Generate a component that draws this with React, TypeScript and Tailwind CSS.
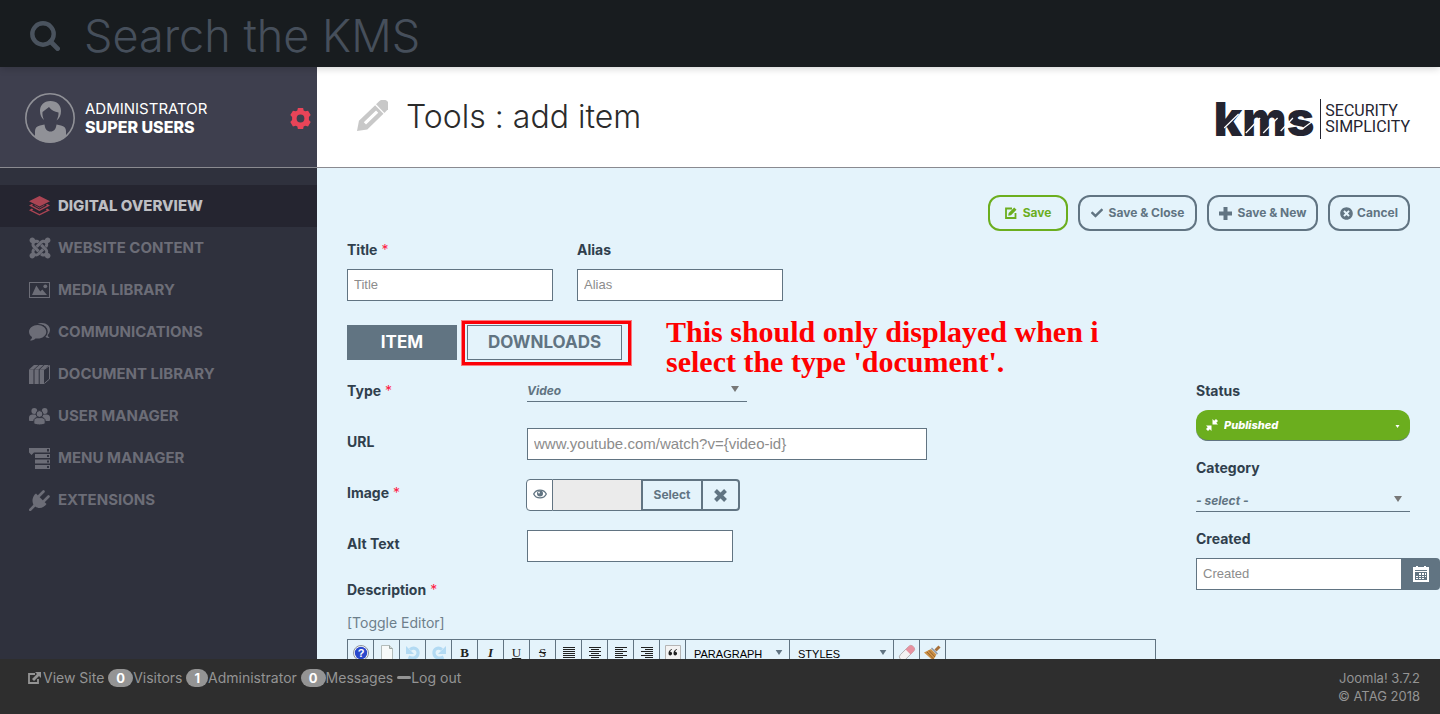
import React from "react";
import { FaCheck, FaJoomla, FaTimesCircle } from "react-icons/fa";

type IconProps = { className?: string };

function SearchIcon({ className }: IconProps) {
  return (
    <svg viewBox="0 0 30 30" className={className} fill="none" stroke="currentColor" aria-hidden="true">
      <circle cx="13" cy="13" r="10.700" strokeWidth="4.400" />
      <path d="M20.500 20.500 27.600 27.600" strokeWidth="4.800" strokeLinecap="round" />
    </svg>
  );
}

function LayersIcon({ className }: IconProps) {
  return (
    <svg viewBox="0 0 21 20" className={className} fill="currentColor" aria-hidden="true">
      <path d="M10.500 0 21 5.200 10.500 10.400 0 5.200Z" />
      <path d="M2.800 8 0 9.600 10.500 15 21 9.600 18.200 8 16.600 8.800 18 9.600 10.500 13.500 3 9.600 4.400 8.800Z" />
      <path d="M2.800 12.600 0 14.200 10.500 19.600 21 14.200 18.200 12.600 16.600 13.400 18 14.200 10.500 18.100 3 14.200 4.400 13.400Z" />
      <path d="M5.500 9.200 10.500 12 15.500 9.200" fill="none" stroke="currentColor" strokeWidth=".800" />
    </svg>
  );
}

function PictureIcon({ className }: IconProps) {
  return (
    <svg viewBox="0 0 21 16" className={className} fill="currentColor" aria-hidden="true">
      <path fillRule="evenodd" d="M0 0H21V16H0ZM1 1V15H20V1Z" />
      <path d="M3 13 7.300 3.500 11.300 9.500 13.300 7.500 18 13Z" />
      <circle cx="16.300" cy="4.300" r="1.900" />
    </svg>
  );
}

function BubblesIcon({ className }: IconProps) {
  return (
    <svg viewBox="0 0 21 18" className={className} fill="currentColor" aria-hidden="true">
      <path d="M8 1.300C9.500.300 11.500 0 13 0 17.500 0 21 3 21 6.800 21 9 20 10.800 18.700 12 18.700 13.300 19.800 14.300 20.800 14.800 18.500 15.300 17 14.600 15.800 13.500L14 13.800 17.500 10V5L14.500 2Z" />
      <ellipse cx="9" cy="8.800" rx="9.800" ry="7.800" fill="#2f313d" />
      <path d="M8.700 2C13.500 2 17.300 5 17.300 8.800S13.500 15.600 8.700 15.600C8 15.600 7.200 15.600 6.500 15.400 5 16.800 3.500 17.500 1.200 17.500V17C2.400 16.300 3 15.300 3 14.100 1.200 12.800 0 11 0 8.800 0 5 3.900 2 8.700 2Z" />
    </svg>
  );
}

function BooksIcon({ className }: IconProps) {
  return (
    <svg viewBox="0 0 21 19" className={className} fill="currentColor" aria-hidden="true">
      <path d="M0 4.500H4.500V19H0ZM5.500 4.500H9.700V19H5.500ZM10.700 4.500H15V19H10.700Z" />
      <path d="M0 4.600 5 0H9.500L4.500 4.600ZM5.500 4.600 10.500 0H14.500L9.700 4.600ZM10.700 4.600 15.500 0H20L15 4.600Z" />
      <path d="M15.300 4.500 20.500.500V14L15.300 18.500" fill="none" stroke="currentColor" />
    </svg>
  );
}

function PeopleIcon({ className }: IconProps) {
  return (
    <svg viewBox="0 0 21 17" className={className} fill="currentColor" aria-hidden="true">
      <circle cx="5.300" cy="3" r="2.900" />
      <circle cx="15.700" cy="3" r="2.900" />
      <path d="M0 12.500V9.500C0 7.500 1.500 6.500 3.500 6.500H6.500L8 8.500 6 13H.800ZM21 12.500V9.500C21 7.500 19.500 6.500 17.500 6.500H14.500L13 8.500 15 13H20.200Z" />
      <g stroke="#2f313d" strokeWidth="1">
        <circle cx="10.500" cy="6" r="3.400" />
        <path d="M4.800 15.500V13C4.800 10.800 6.500 9.600 8.500 9.600H12.500C14.500 9.600 16.200 10.800 16.200 13V15.500C14.500 17.400 6.500 17.400 4.800 15.500Z" />
      </g>
    </svg>
  );
}

function MenuStackIcon({ className }: IconProps) {
  return (
    <svg viewBox="0 0 21 21" className={className} aria-hidden="true">
      <path d="M0 0H21V4.500H5L2.500 7 0 4.500ZM6 6H21V10H6ZM6 11.500H21V15.500H6ZM6 17H21V21H6Z" fill="currentColor" />
      <path d="M18 1H20V3.500H18ZM18 7H20V9H18ZM18 12.500H20V14.500H18ZM18 18H20V20H18Z" fill="#2f313d" />
    </svg>
  );
}

function PlugIcon({ className }: IconProps) {
  return (
    <svg viewBox="0 0 21 21" className={className} aria-hidden="true">
      <path d="M1.200 19.800 5.500 15.500M10 6 14.500 1.500M15 11 19.500 6.500" stroke="currentColor" strokeWidth="2.600" strokeLinecap="round" />
      <path d="M7 3.500 17.500 14C15.500 17.500 10 19.500 6.300 16.500L4.500 14.700C2.500 11 3.500 6 7 3.500Z" fill="currentColor" />
    </svg>
  );
}

function GearIcon({ className }: IconProps) {
  return (
    <svg viewBox="0 0 20 20" className={className} fill="currentColor" aria-hidden="true">
      <path
        fillRule="evenodd"
        d="M7.500 0H12.500L13 2.400 14.500 3.200 17.200 2.500 19.700 6.600 18 8.500V11.500L19.700 13.400 17.200 17.500 14.500 16.800 13 17.600 12.500 20H7.500L7 17.600 5.500 16.800 2.800 17.500.300 13.400 2 11.500V8.500L.300 6.600 2.800 2.500 5.500 3.200 7 2.400ZM10 6.300A3.700 3.700 0 1 0 10 13.700 3.700 3.700 0 1 0 10 6.300Z"
      />
    </svg>
  );
}

function PencilIcon({ className }: IconProps) {
  return (
    <svg viewBox="0 0 31 31" className={className} fill="#c8c8c8" aria-hidden="true">
      <g transform="translate(0 31) rotate(-44)">
        <path fillRule="evenodd" d="M0 0 8.500-6H31V6H8.500ZM11-1.600V1.600H28V-1.600Z" />
        <path d="M32.300-6H37C40-6 42.500-3 42.500 0S40 6 37 6H32.300Z" />
      </g>
    </svg>
  );
}

function EditSquareIcon({ className }: IconProps) {
  return (
    <svg viewBox="0 0 12 12" className={className} aria-hidden="true">
      <path d="M7 1.500H1V11H10.500V6" fill="none" stroke="currentColor" strokeWidth="1.800" />
      <path d="M3.200 8.800 3.700 6 9.200.500 11.500 2.800 6 8.300Z" fill="currentColor" />
    </svg>
  );
}

function PlusIcon({ className }: IconProps) {
  return (
    <svg viewBox="0 0 13 13" className={className} fill="currentColor" aria-hidden="true">
      <path d="M4.500 0H8.500V4.500H13V8.500H8.500V13H4.500V8.500H0V4.500H4.500Z" />
    </svg>
  );
}

function CrossIcon({ className }: IconProps) {
  return (
    <svg viewBox="0 0 13 13" className={className} stroke="currentColor" strokeWidth="4" aria-hidden="true">
      <path d="M1.500 1.500 11.500 11.500M11.500 1.500 1.500 11.500" />
    </svg>
  );
}

function OutIcon({ className }: IconProps) {
  return (
    <svg viewBox="0 0 13 12" className={className} aria-hidden="true">
      <path d="M7 2H1V11H10V7" fill="none" stroke="currentColor" strokeWidth="1.800" />
      <path d="M7 0H13V6L11 4 6 9 4 7 9 2Z" fill="currentColor" />
    </svg>
  );
}

function AvatarIcon({ className }: IconProps) {
  return (
    <svg viewBox="0 0 50 50" className={className} aria-hidden="true">
      <defs>
        <clipPath id="avatar-circle">
          <circle cx="25" cy="25" r="24.500" />
        </clipPath>
      </defs>
      <g clipPath="url(#avatar-circle)">
        <path
          d="M10 50V38C10 35 12 33 15 32.500L19.500 31.500C20 36 22 38.500 25.500 38.500S31 36 31.500 31.500L36 32.500C39 33 41 35 41 38V50Z"
          fill="#909197"
        />
        <path
          d="M25.500 8C18.500 8 15 12.500 15 18 15 22 16.500 25 19 27 17.500 24 17.300 21.500 17.500 19L24 14C26.500 17.500 29.500 18.500 33.500 19.500 33.700 22 33 25 31.500 27.500 34.500 25.500 36 22 36 18 36 12 32 8 25.500 8Z"
          fill="#909197"
        />
      </g>
      <circle cx="25" cy="25" r="24.200" fill="none" stroke="#909197" strokeWidth="1.600" />
    </svg>
  );
}

function EyeIcon({ className }: IconProps) {
  return (
    <svg viewBox="0 0 14 10" className={className} aria-hidden="true">
      <path d="M.700 5C3-.200 11-.200 13.300 5 11 10.200 3 10.200.700 5Z" fill="none" stroke="currentColor" strokeWidth="1.300" />
      <circle cx="7" cy="4.500" r="3" fill="currentColor" />
      <circle cx="6" cy="3.500" r=".900" fill="#fff" />
    </svg>
  );
}

function CompressIcon({ className }: IconProps) {
  return (
    <svg viewBox="0 0 12 12" className={className} fill="currentColor" aria-hidden="true">
      <path d="M6.500 0 8.200 1.700 10 0 12 2 10.300 3.800 12 5.500H6.500Z" />
      <path d="M0 6.500H5.500V12L3.800 10.300 2 12 0 10 1.700 8.200Z" />
    </svg>
  );
}

function CalendarIcon({ className }: IconProps) {
  return (
    <svg viewBox="0 0 16 16" className={className} shapeRendering="crispEdges" aria-hidden="true">
      <path d="M0 1H3V0H5V1H11V0H13V1H16V16H0Z" fill="#fff" />
      <path d="M2 4H14V5H2ZM2 6H14V14H2Z" fill="#617482" />
      <path d="M6 7H8V9H6ZM9 7H11V9H9ZM12 7H13V9H12ZM3 10H5V11H3ZM6 10H8V11H6ZM9 10H11V11H9ZM12 10H13V11H12ZM3 12H5V13H3ZM6 12H8V13H6ZM9 12H11V13H9Z" fill="#fff" />
    </svg>
  );
}

function Caret({ className }: IconProps) {
  return (
    <svg viewBox="0 0 8 6" className={className} fill="currentColor" aria-hidden="true">
      <path d="M0 0H8L4 6Z" />
    </svg>
  );
}

function HelpIcon() {
  return (
    <svg viewBox="0 0 16 16" className="size-4" aria-hidden="true">
      <circle cx="8" cy="8" r="7.500" fill="#fff" stroke="#8d949b" />
      <circle cx="8" cy="8" r="6.200" fill="#2a49cc" />
      <text x="8" y="12" textAnchor="middle" fill="#fff" fontSize="11" fontWeight="700" fontFamily="Liberation Sans">?</text>
    </svg>
  );
}

function PageIcon() {
  return (
    <svg viewBox="0 0 16 16" className="size-4" aria-hidden="true">
      <path d="M2.500.500H10.500L13.500 3.500V16H2.500Z" fill="#f7faf9" stroke="#b3bcba" />
      <path d="M10.500.500V3.500H13.500" fill="#cfd8d5" stroke="#98a3a0" />
    </svg>
  );
}

function UndoIcon({ className }: IconProps) {
  return (
    <svg viewBox="0 0 16 16" className={className} aria-hidden="true">
      <path d="M5 4.500C9 1.500 13.500 4 13 8.500 12.500 12.500 8 14.500 3.500 12" fill="none" stroke="#b2daf3" strokeWidth="3.200" />
      <path d="M1 1V9H9Z" fill="#b2daf3" />
    </svg>
  );
}

function LinesIcon({ widths, align }: { widths: number[]; align: "left" | "center" | "right" }) {
  return (
    <svg viewBox="0 0 12 12" className="size-3" shapeRendering="crispEdges" aria-hidden="true">
      {widths.map((w, i) => (
        <rect
          key={i}
          x={align === "left" ? 0 : align === "right" ? 12 - w : (12 - w) / 2}
          y={i * 2}
          width={w}
          height="1"
          fill="#222"
        />
      ))}
    </svg>
  );
}

function EraserIcon() {
  return (
    <svg viewBox="0 0 18 18" className="size-[18px]" aria-hidden="true">
      <g transform="rotate(-45 9 9)">
        <rect x="0" y="5.500" width="18" height="7" rx="3" fill="#f4f2f2" stroke="#a9a4a6" strokeWidth=".800" />
        <path d="M10.500 5.500H15A3 3 0 0 1 18 8.500V9.500A3 3 0 0 1 15 12.500H10.500Z" fill="#e791a0" />
      </g>
    </svg>
  );
}

function BroomIcon() {
  return (
    <svg viewBox="0 0 17 16" className="h-4 w-[17px]" aria-hidden="true">
      <path d="M11.500 5.500 15.500 1.500" stroke="#a8703a" strokeWidth="3" />
      <path d="M0 7.500 7 4 12.500 9.500 9 15.500Z" fill="#cb9148" />
      <path d="M3 7 9.500 14M5 5.500 11 12" stroke="#99632a" />
      <path d="M7.500 3 13.500 9" stroke="#8b95a3" strokeWidth="1.200" />
    </svg>
  );
}

const navItems = [
  { label: "DIGITAL OVERVIEW", icon: <LayersIcon className="w-[21px] text-[#ab4453]" />, active: true },
  { label: "WEBSITE CONTENT", icon: <FaJoomla className="size-6 shrink-0" /> },
  { label: "MEDIA LIBRARY", icon: <PictureIcon className="w-[21px]" /> },
  { label: "COMMUNICATIONS", icon: <BubblesIcon className="w-[21px]" /> },
  { label: "DOCUMENT LIBRARY", icon: <BooksIcon className="w-[21px]" /> },
  { label: "USER MANAGER", icon: <PeopleIcon className="w-[21px]" /> },
  { label: "MENU MANAGER", icon: <MenuStackIcon className="w-[21px]" /> },
  { label: "EXTENSIONS", icon: <PlugIcon className="w-[21px]" /> },
];

const labelClass = "block text-[14px] leading-7 font-bold text-[#303f4d]";
const inputClass =
  "h-8 border border-[#617482] bg-white px-1.5 pb-0.5 font-['Liberation_Sans',sans-serif] text-[#555] placeholder:text-[#8c8c8c] outline-none";
const toolButton = "flex w-[26px] shrink-0 items-center justify-center border-r border-[#617482]";
const glyph = "font-['Liberation_Serif',serif] text-[13px] text-[#222]";

function Star() {
  return <span className="font-normal text-[#ff1a44]"> *</span>;
}

function ToolbarSelect({ label }: { label: string }) {
  return (
    <div className="relative w-[104px] shrink-0 border-r border-[#617482]">
      <select
        aria-label={label}
        className="size-full appearance-none bg-transparent pb-1 pl-2 font-['Liberation_Sans',sans-serif] text-[11px] text-black outline-none"
      >
        <option>{label}</option>
      </select>
      <Caret className="pointer-events-none absolute top-2.5 right-1.5 h-[5px] w-2 text-[#617482]" />
    </div>
  );
}

function Badge({ children }: { children: React.ReactNode }) {
  return (
    <span className="rounded-full bg-[#949494] px-2 text-[13px] leading-[18px] font-bold text-white">{children}</span>
  );
}

export default function App() {
  return (
    <div className="flex h-screen flex-col overflow-hidden font-['Inter',sans-serif]">
      <header className="z-10 flex h-[67px] shrink-0 items-center gap-6 bg-[#181c1f] pt-1 pl-[30px] shadow-[0_1px_8px_rgba(0,0,0,0.2)]">
        <SearchIcon className="size-[30px] shrink-0 text-[#4a535e]" />
        <input
          type="search"
          aria-label="Search the KMS"
          placeholder="Search the KMS"
          className="w-full bg-transparent text-[45px] leading-[60px] font-light text-white outline-none placeholder:text-[#464f5b]"
        />
      </header>

      <div className="flex min-h-0 flex-1">
        <aside className="w-[317px] shrink-0 bg-[#2f313d]">
          <div className="flex h-[101px] items-center border-b border-[#8a8a90] bg-[#3e3f4e] pt-0.5 pr-1.5 pl-[25px]">
            <AvatarIcon className="size-[50px]" />
            <div className="ml-2.5 flex-1 leading-[18px] text-white">
              <div className="text-[15px]">ADMINISTRATOR</div>
              <div className="text-[16px] font-extrabold">SUPER USERS</div>
            </div>
            <button type="button" aria-label="Settings">
              <GearIcon className="size-[21px] text-[#e94458]" />
            </button>
          </div>
          <nav className="pt-[17px]">
            {navItems.map((item) => (
              <a
                key={item.label}
                href="#"
                className={
                  item.active
                    ? "flex h-[42px] items-center gap-2 bg-[#252530] pl-[29px] text-[15px] font-extrabold text-[#bebfc3]"
                    : "flex h-[42px] items-center gap-2 pl-[29px] text-[15px] font-bold text-[#6c6d77]"
                }
              >
                <span className="flex w-[21px] justify-center">{item.icon}</span>
                {item.label}
              </a>
            ))}
          </nav>
        </aside>

        <main className="min-w-0 flex-1 overflow-hidden bg-[#e4f3fb]">
          <div className="flex h-[101px] items-center border-b border-[#8a8a90] bg-white pr-[30px] pl-10">
            <PencilIcon className="-mt-1 size-[31px]" />
            <h1 className="ml-[18px] flex-1 text-[32px] font-light text-[#2b2b2b]">Tools : add item</h1>
            <div className="flex items-center pt-1 text-[#242430]">
              <div className="relative text-[47px] leading-[40px] font-black">
                kms
                <svg viewBox="0 0 98 40" preserveAspectRatio="none" className="absolute inset-0 size-full" aria-hidden="true">
                  <path d="M10 29 24 15M31 34 45 19M48 34 62 19M65 32 77 19M86 30 98 21" stroke="#fff" strokeWidth="1.200" fill="none" />
                </svg>
              </div>
              <div className="ml-1.5 border-l border-[#242430] py-1 pl-1 font-['Roboto',sans-serif] text-[16px] leading-4">
                <div>SECURITY</div>
                <div>SIMPLICITY</div>
              </div>
            </div>
          </div>

          <form className="px-[30px] pt-[27px]">
            <div className="flex justify-end gap-2.5 text-[12px] font-bold text-[#617482]">
              <button type="button" className="flex h-9 w-20 items-center justify-center gap-1.5 rounded-xl border-2 border-[#6bae1e] text-[#6bae1e]">
                <EditSquareIcon className="size-3" />
                Save
              </button>
              <button type="button" className="flex h-9 w-[119px] items-center justify-center gap-1.5 rounded-xl border-2 border-[#617482]">
                <FaCheck className="size-3" />
                Save &amp; Close
              </button>
              <button type="button" className="flex h-9 w-[111px] items-center justify-center gap-1.5 rounded-xl border-2 border-[#617482]">
                <PlusIcon className="size-[13px]" />
                Save &amp; New
              </button>
              <button type="button" className="flex h-9 w-[82px] items-center justify-center gap-1 rounded-xl border-2 border-[#617482]">
                <FaTimesCircle className="size-[13px]" />
                Cancel
              </button>
            </div>

            <div className="mt-[5px] flex gap-6">
              <div>
                <label htmlFor="title" className={labelClass}>
                  Title<Star />
                </label>
                <input id="title" placeholder="Title" className={`${inputClass} mt-[5px] block w-[206px] text-[13px]`} />
              </div>
              <div>
                <label htmlFor="alias" className={labelClass}>
                  Alias
                </label>
                <input id="alias" placeholder="Alias" className={`${inputClass} mt-[5px] block w-[206px] text-[13px]`} />
              </div>
            </div>

            <div className="relative mt-6 flex gap-2.5 text-[17px] font-bold">
              <button type="button" className="h-[35px] w-[110px] bg-[#617482] text-white">
                ITEM
              </button>
              <button type="button" className="h-[35px] w-[155px] border border-[#617482] text-[#617482]">
                DOWNLOADS
              </button>
              <div className="absolute -top-[5px] left-[114px] h-[46px] w-[171px] border-4 border-[#fb0007] outline-1 -outline-offset-1 outline-[#f97b80]" />
              <p className="absolute -top-2 left-[319px] font-['Liberation_Serif',serif] text-[30px] leading-[30px] font-bold whitespace-nowrap text-[#fe0000]">
                This should only displayed when i
                <br />
                select the type 'document'.
              </p>
            </div>

            <div className="mt-[17px] flex gap-10">
              <div className="min-w-0 flex-1">
                <div className="flex flex-col gap-[19px]">
                  <div className="flex h-8">
                    <label htmlFor="type" className={`${labelClass} w-[180px]`}>
                      Type<Star />
                    </label>
                    <div className="relative h-[25px] w-[220px] border-b border-[#617482] text-[#617482]">
                      <select id="type" className="h-6 w-full appearance-none bg-transparent pb-1 text-[12px] font-bold italic outline-none">
                        <option>Video</option>
                      </select>
                      <Caret className="pointer-events-none absolute top-[9px] right-2 h-1.5 w-2 text-[#777]" />
                    </div>
                  </div>
                  <div className="flex h-8">
                    <label htmlFor="url" className={`${labelClass} w-[180px]`}>
                      URL
                    </label>
                    <input id="url" placeholder="www.youtube.com/watch?v={video-id}" className={`${inputClass} w-[400px] text-[15px]`} />
                  </div>
                  <div className="flex h-8">
                    <label htmlFor="image" className={`${labelClass} w-[179px]`}>
                      Image<Star />
                    </label>
                    <div className="flex text-[#617482]">
                      <button type="button" aria-label="Preview" className="flex w-[27px] justify-center rounded-l border border-[#617482] bg-white pt-[9px]">
                        <EyeIcon className="h-2.5 w-[14px]" />
                      </button>
                      <input id="image" readOnly className="w-[88px] border-y border-[#617482] bg-[#ebebeb] outline-none" />
                      <button type="button" className="w-[62px] border-2 border-[#617482] text-[12px] font-bold">
                        Select
                      </button>
                      <button type="button" aria-label="Clear image" className="flex w-[37px] items-center justify-center rounded-r border-2 border-l-0 border-[#617482]">
                        <CrossIcon className="size-[13px]" />
                      </button>
                    </div>
                  </div>
                  <div className="flex h-8">
                    <label htmlFor="alt" className={`${labelClass} w-[180px]`}>
                      Alt Text
                    </label>
                    <input id="alt" className={`${inputClass} w-[206px] text-[13px]`} />
                  </div>
                </div>
                <div className="mt-3.5 text-[14px] leading-7 font-bold text-[#303f4d]">
                  Description<Star />
                </div>
                <a href="#" className="mt-[9px] block text-[14px] leading-5 text-[#6d7f8b]">
                  [Toggle Editor]
                </a>
                <div className="mt-1.5 flex h-[27px] border border-[#617482]">
                  <button type="button" aria-label="Help" className={toolButton}><HelpIcon /></button>
                  <button type="button" aria-label="New document" className={toolButton}><PageIcon /></button>
                  <button type="button" aria-label="Undo" className={toolButton}><UndoIcon className="size-4" /></button>
                  <button type="button" aria-label="Redo" className={toolButton}><UndoIcon className="size-4 -scale-x-100" /></button>
                  <button type="button" className={toolButton}><span className={`${glyph} font-bold`}>B</span></button>
                  <button type="button" className={toolButton}><span className={`${glyph} font-bold italic`}>I</span></button>
                  <button type="button" className={toolButton}><span className={`${glyph} underline`}>U</span></button>
                  <button type="button" className={toolButton}><span className={`${glyph} line-through`}>S</span></button>
                  <button type="button" aria-label="Justify" className={toolButton}><LinesIcon align="left" widths={[12, 12, 12, 12, 12, 12]} /></button>
                  <button type="button" aria-label="Align center" className={toolButton}><LinesIcon align="center" widths={[12, 8, 12, 8, 12, 8]} /></button>
                  <button type="button" aria-label="Align left" className={toolButton}><LinesIcon align="left" widths={[12, 8, 12, 8, 12, 8]} /></button>
                  <button type="button" aria-label="Align right" className={toolButton}><LinesIcon align="right" widths={[12, 8, 12, 8, 12, 8]} /></button>
                  <button type="button" aria-label="Blockquote" className={toolButton}>
                    <svg viewBox="0 0 16 16" className="size-4" aria-hidden="true">
                      <path d="M.500.500H15.500V15.500H.500Z" fill="#f3f3f3" stroke="#b5b5b5" />
                      <path d="M7 4C4.500 4.500 3.500 6.500 3.500 8.500A1.800 1.800 0 1 0 5.200 6.800C5.300 5.700 6 5 7 4.700ZM12 4C9.500 4.500 8.500 6.500 8.500 8.500A1.800 1.800 0 1 0 10.200 6.800C10.300 5.700 11 5 12 4.700Z" fill="#222" />
                    </svg>
                  </button>
                  <ToolbarSelect label="PARAGRAPH" />
                  <ToolbarSelect label="STYLES" />
                  <button type="button" aria-label="Remove formatting" className={toolButton}><EraserIcon /></button>
                  <button type="button" aria-label="Clean up" className={toolButton}><BroomIcon /></button>
                </div>
              </div>

              <div className="w-[214px] shrink-0">
                <label htmlFor="status" className={labelClass}>
                  Status
                </label>
                <div className="relative mt-[5px] h-[31px] overflow-hidden rounded-xl border-b border-[#617482] bg-[#6bae1e] text-white">
                  <select id="status" className="size-full appearance-none bg-transparent pl-7 text-[11px] font-extrabold italic outline-none">
                    <option>Published</option>
                  </select>
                  <CompressIcon className="pointer-events-none absolute top-[9px] left-2.5 size-3" />
                  <Caret className="pointer-events-none absolute top-[15px] right-2.5 h-[3px] w-[5px]" />
                </div>
                <label htmlFor="category" className={`${labelClass} mt-[13px]`}>
                  Category
                </label>
                <div className="relative mt-[5px] h-[25px] border-b border-[#617482] text-[#617482]">
                  <select id="category" className="h-6 w-full appearance-none bg-transparent pb-1 text-[12px] font-bold italic outline-none">
                    <option>- select -</option>
                  </select>
                  <Caret className="pointer-events-none absolute top-[9px] right-2 h-1.5 w-2 text-[#777]" />
                </div>
                <label htmlFor="created" className={`${labelClass} mt-[13px]`}>
                  Created
                </label>
                <div className="-mr-[30px] mt-[5px] flex">
                  <input id="created" placeholder="Created" className={`${inputClass} min-w-0 flex-1 border-r-0 text-[13px]`} />
                  <button type="button" aria-label="Open calendar" className="flex h-8 w-[39px] items-center justify-center rounded-r bg-[#617482]">
                    <CalendarIcon className="size-4" />
                  </button>
                </div>
              </div>
            </div>
          </form>
        </main>
      </div>

      <footer className="z-10 flex h-[55px] shrink-0 justify-between bg-[#2e2e2e] px-5 pt-2.5 leading-[18px] text-[#949494]">
        <div className="flex gap-1 pl-2 text-[14px]">
          <a href="#" className="flex gap-0.5">
            <OutIcon className="mt-[3px] h-3 w-[13px]" />
            View Site
          </a>
          <span className="flex items-start"><Badge>0</Badge>Visitors</span>
          <span className="flex items-start"><Badge>1</Badge>Administrator</span>
          <a href="#" className="flex items-start"><Badge>0</Badge>Messages</a>
          <a href="#" className="flex items-start">
            <span className="mt-[7px] h-[3px] w-[14px] rounded-sm bg-[#949494]" />
            Log out
          </a>
        </div>
        <div className="text-right text-[13px]">
          Joomla! 3.7.2
          <br />© ATAG 2018
        </div>
      </footer>
    </div>
  );
}
